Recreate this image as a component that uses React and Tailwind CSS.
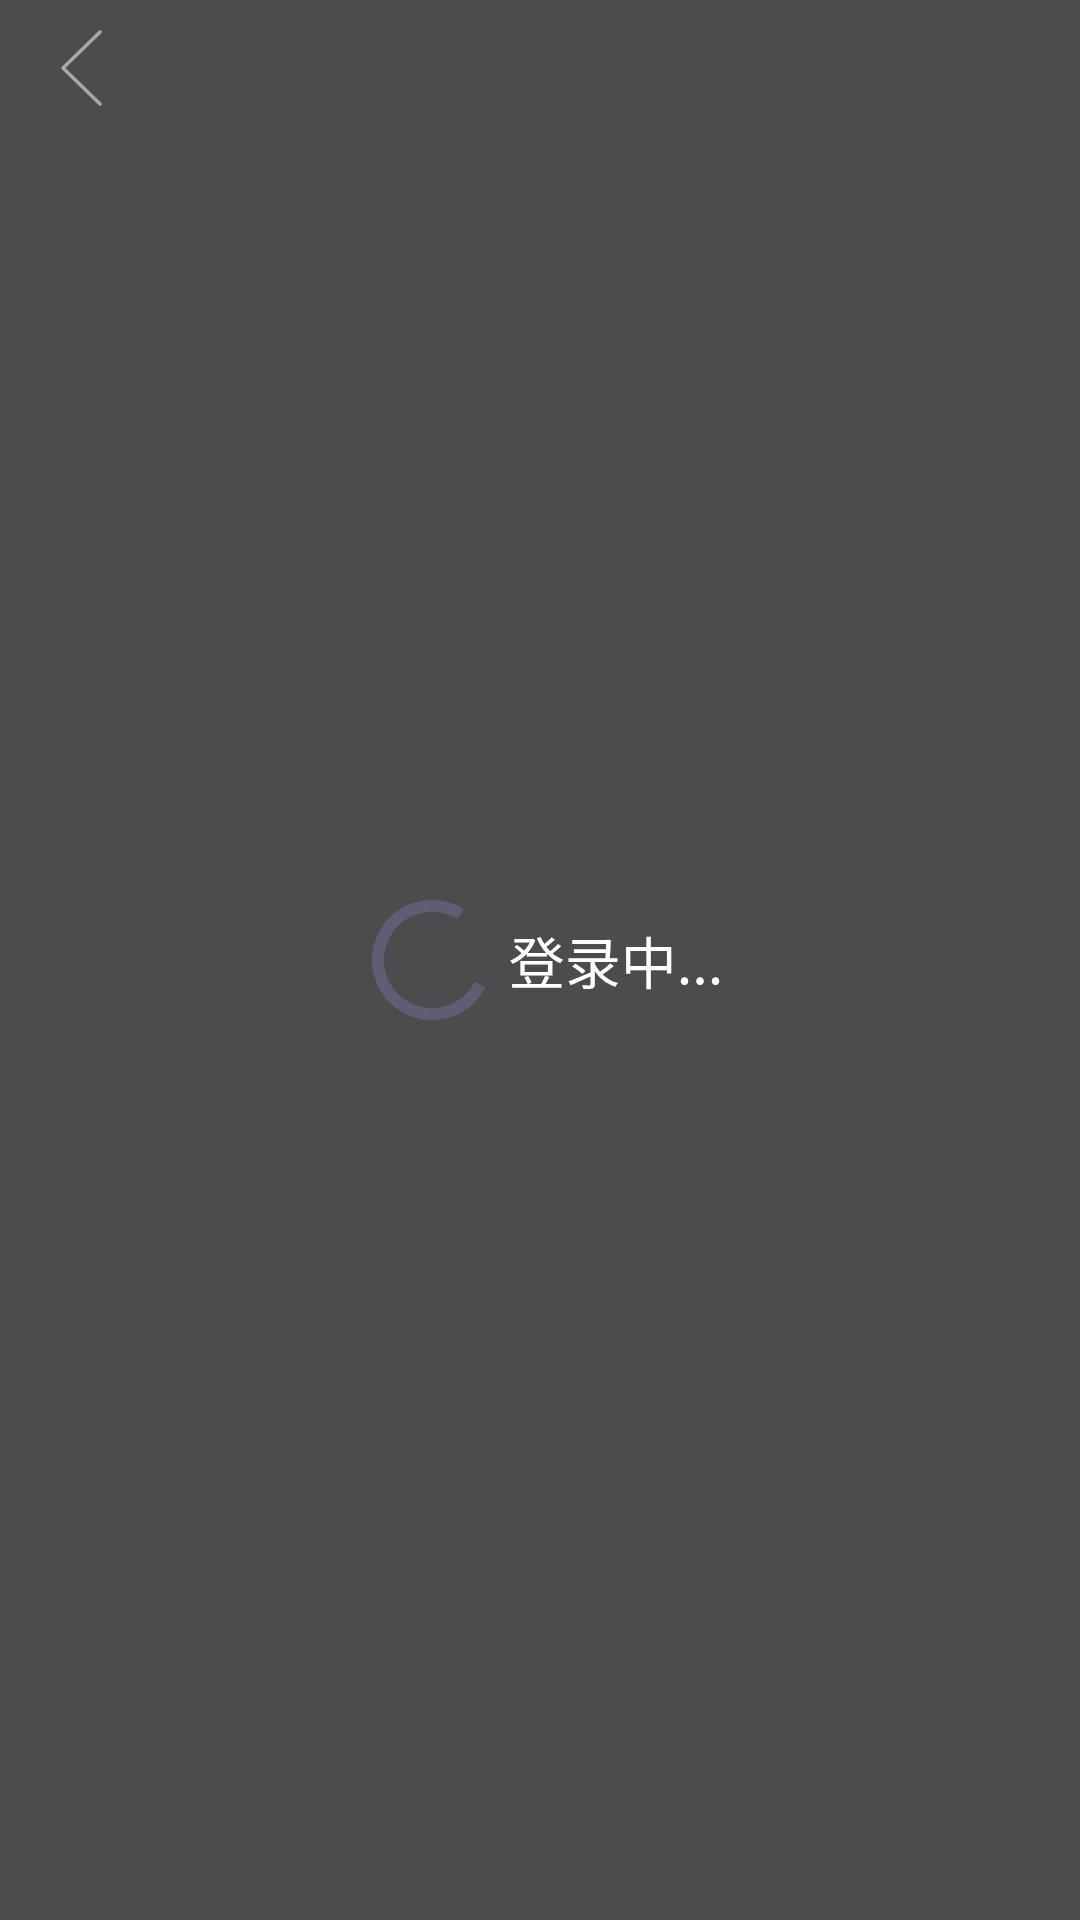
export default function App() {
  return (
    <div
      className="relative flex h-screen w-full flex-col bg-[#4c4c4c]"
      style={{ fontFamily: '"Noto Sans CJK SC", "Noto Sans", sans-serif' }}
    >
      <div className="flex h-[136px] items-start pl-[58px] pt-[28px]">
        <button type="button" className="block">
          <svg width="48" height="80" viewBox="0 0 48 80" fill="none">
            <polyline
              points="42,4 5,40 42,76"
              stroke="#a9a9a9"
              strokeWidth="3.5"
              strokeLinecap="round"
              strokeLinejoin="round"
            />
          </svg>
        </button>
      </div>

      <div className="flex flex-1 items-center justify-center pb-[136px] pl-[14px]">
        <div className="flex items-center gap-[16px]">
          <svg width="122" height="122" viewBox="0 0 122 122" className="block">
            <circle
              cx="61"
              cy="61"
              r="54"
              fill="none"
              stroke="#635a73"
              strokeWidth="12"
              strokeDasharray="259 80"
              transform="rotate(27 61 61)"
            />
          </svg>
          <span className="text-[56px] leading-none text-white">登录中...</span>
        </div>
      </div>
    </div>
  );
}
